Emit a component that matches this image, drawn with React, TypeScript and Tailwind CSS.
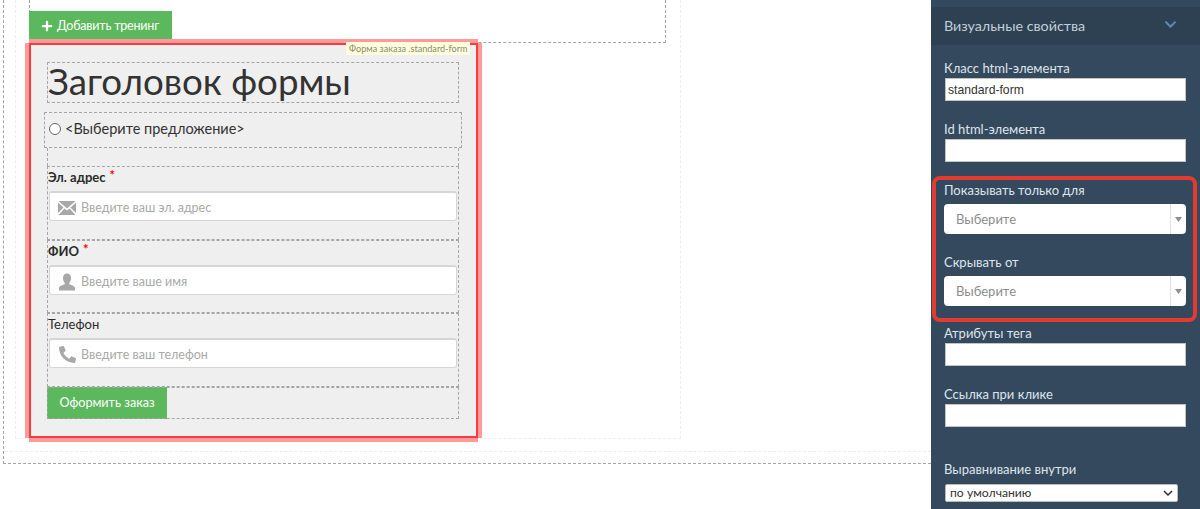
import { FaPlus, FaChevronDown, FaPhone } from "react-icons/fa";

const dash = "border-dashed border-[#a5a5a5]";

function Mail() {
  return (
    <svg width="18" height="16" viewBox="0 0 18 16" className="text-[#a8a8a8]" fill="currentColor">
      <path d="M0.5 1 H17.5 L9 8.5 Z" />
      <path d="M0 2.5 L5.5 7.5 L0 13 Z" />
      <path d="M18 2.5 L12.5 7.5 L18 13 Z" />
      <path d="M6.5 8.5 L9 10.5 L11.5 8.5 L17.5 15 H0.5 Z" />
    </svg>
  );
}

function User() {
  return (
    <svg width="18" height="18" viewBox="0 0 18 18" className="text-[#a8a8a8]" fill="currentColor">
      <path d="M9 0.5 C11.6 0.5 13 2.4 13 5 C13 7.2 12.2 9 11.2 10 L11.2 11.3 C13.5 12.2 17 13 17 15 L17 17.5 H1 L1 15 C1 13 4.5 12.2 6.8 11.3 L6.8 10 C5.8 9 5 7.2 5 5 C5 2.4 6.4 0.5 9 0.5 Z" />
    </svg>
  );
}

function Field({ label, required, bold, icon, placeholder, h }: { label: string; required?: boolean; bold?: boolean; icon: React.ReactNode; placeholder: string; h: string }) {
  return (
    <div className={`${h} border ${dash} flex flex-col`}>
      <div className={`h-[24px] shrink-0 flex items-start text-[13px] leading-[18px] pt-[1px] text-[#2b2b2b] ${bold ? "font-bold" : ""}`}>
        {label}
        {required && <span className="text-[#f00] ml-[4px] text-[13px] leading-[15px]">*</span>}
      </div>
      <div className="mx-[1px] h-[30px] shrink-0 bg-white rounded-[3px] border border-[#d6d6d6] border-t-2 flex items-center pl-[8px]">
        <span className="w-[23px] flex items-center shrink-0 mt-[2px]">{icon}</span>
        <span className="text-[12.5px] text-[#a9a9a9] pt-[3px]">{placeholder}</span>
      </div>
    </div>
  );
}

function SideLabel({ children, className = "" }: { children: React.ReactNode; className?: string }) {
  return <div className={`text-[13px] leading-[16px] text-[#dfe5ea] ${className}`}>{children}</div>;
}

function SideInput({ value, className = "" }: { value?: string; className?: string }) {
  return (
    <div className={`ml-[1px] w-[241px] h-[23px] bg-white border border-[#c4c4c4] pl-[2px] pt-[1px] flex items-center text-[12.2px] text-[#333] font-['Liberation_Sans',sans-serif] ${className}`}>
      {value}
    </div>
  );
}

function PickSelect() {
  return (
    <div className="w-[242px] h-[30px] bg-white rounded-[4px] flex items-center text-[13px] text-[#8d8d8d]">
      <span className="pl-[12px] pt-[2px] flex-1">Выберите</span>
      <span className="h-full w-[16px] border-l border-[#e2e2e2] flex items-center justify-center">
        <svg width="7" height="5" viewBox="0 0 7 5" fill="#8f8f8f"><path d="M0 0 H7 L3.5 5 Z" /></svg>
      </span>
    </div>
  );
}

export default function App() {
  return (
    <div className="w-[1200px] h-[509px] bg-white flex overflow-hidden font-['Lato','Noto_Sans',sans-serif]">
      <main className="w-[931px] shrink-0 pl-[3px]">
        <div className={`h-[464px] border-l border-b ${dash} pl-[1px] pb-[11px]`}>
          <div className="h-full border-b border-dashed border-[#eeeeee] pl-[10px]">
            <div className="w-[666px] h-[439px] border-l border-r border-b border-dashed border-[#eeeeee] pl-[13px]">
              <div className={`w-[637px] h-[43px] border-l border-r border-b ${dash} pt-[11px]`}>
                <button className="-ml-[1px] w-[143px] h-[30px] bg-[#5cb85c] text-white text-[12.5px] tracking-[-0.2px] whitespace-nowrap flex items-center pl-[12px] gap-[4px]">
                  <FaPlus className="text-[12px]" />
                  Добавить тренинг
                </button>
              </div>
              <section className="relative w-[449px] h-[395px] border-2 border-[#f83c3c] bg-[#efefef] pt-[17px] pl-[16px] pr-[17px] shadow-[0_-4px_0_0_#ff9a9a,4px_0_0_0_#ff9a9a,0_4px_0_0_#ff9a9a,-4px_0_0_0_#ff9a9a]">
                <div className="absolute left-[315px] -top-[3px] h-[13px] px-[3px] bg-[#ffffdd] text-[9.1px] leading-[13px] text-[#8a8a70] whitespace-nowrap">
                  Форма заказа .standard-form
                </div>
                <div className={`h-[41px] border ${dash} text-[36.7px] leading-[36px] text-[#333] whitespace-nowrap`}>
                  Заголовок формы
                </div>
                <div className={`mt-[9px] -mx-[3px] h-[36px] border ${dash} flex items-center pl-[4px] pb-[3px] text-[14.5px] text-[#333]`}>
                  <span className="w-[12px] h-[12px] rounded-full border border-[#666] bg-white mr-[4px]" />
                  {"<Выберите предложение>"}
                </div>
                <div className={`h-[18px] border-x ${dash}`} />
                <Field h="h-[74px]" bold required label="Эл. адрес" icon={<Mail />} placeholder="Введите ваш эл. адрес" />
                <Field h="h-[73px]" bold required label="ФИО" icon={<User />} placeholder="Введите ваше имя" />
                <Field h="h-[74px]" label="Телефон" icon={<FaPhone className="text-[#a8a8a8] text-[17px] scale-x-[-1] ml-[1px]" />} placeholder="Введите ваш телефон" />
                <div className="relative h-[32px] after:absolute after:inset-0 after:border after:border-dashed after:border-[#a5a5a5] after:pointer-events-none">
                  <button className="w-[120px] h-[32px] bg-[#5cb85c] text-white text-[12.6px] text-center">Оформить заказ</button>
                </div>
              </section>
            </div>
          </div>
        </div>
      </main>
      <aside className="w-[269px] shrink-0 bg-[#34495e] pt-[7px]">
        <div className="h-[38px] bg-[#2e4153] pl-[13px] pr-[23px] flex items-center justify-between text-[14.3px] text-[#c3ced8]">
          Визуальные свойства
          <FaChevronDown className="text-[#5b89b3] text-[13px] -mt-[4px]" />
        </div>
        <div className="pl-[13px] pt-[15px]">
          <SideLabel>Класс html-элемента</SideLabel>
          <SideInput className="mt-[2px]" value="standard-form" />
          <SideLabel className="mt-[20px]">Id html-элемента</SideLabel>
          <SideInput className="mt-[2px]" />
          <div className="-ml-[12px] mt-[14px] w-[265px] h-[146px] border-[4px] border-[#e23c30] rounded-[8px] pl-[8px] pt-[2px]">
            <SideLabel>Показывать только для</SideLabel>
            <div className="mt-[6px]"><PickSelect /></div>
            <SideLabel className="mt-[20px]">Скрывать от</SideLabel>
            <div className="mt-[6px]"><PickSelect /></div>
          </div>
          <SideLabel className="mt-[3px]">Атрибуты тега</SideLabel>
          <SideInput className="mt-[2px]" />
          <SideLabel className="mt-[20px]">Ссылка при клике</SideLabel>
          <SideInput className="mt-[2px]" />
          <SideLabel className="mt-[34px]">Выравнивание внутри</SideLabel>
          <div className="mt-[7px] ml-[1px] w-[233px] h-[18px] bg-white border border-[#bbb] rounded-[2px] pl-[4px] pr-[4px] flex items-center justify-between text-[12.2px] text-[#333]">
            по умолчанию
            <svg width="10" height="6" viewBox="0 0 10 6" fill="none" stroke="#333" strokeWidth="1.5"><path d="M1 1 L5 5 L9 1" /></svg>
          </div>
        </div>
      </aside>
    </div>
  );
}
